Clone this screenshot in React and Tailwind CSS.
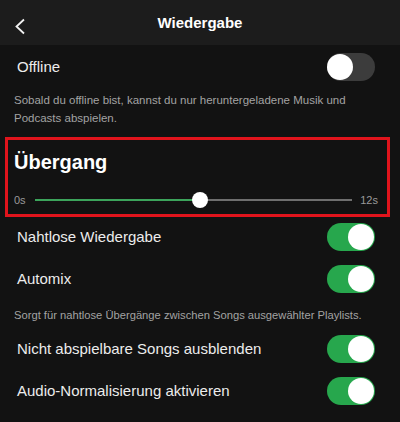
import React, { useState } from "react";

const FONT = { fontFamily: '"Liberation Sans", Arial, sans-serif' };

function Toggle({ on, onClick }) {
  return (
    <button
      onClick={onClick}
      className={`relative w-[48px] h-[28px] rounded-full shrink-0 ${on ? "bg-[#27a74d]" : "bg-[#3c3c3c]"}`}
    >
      <span
        className={`absolute top-[1px] w-[26px] h-[26px] rounded-full bg-white ${on ? "right-[1px]" : "left-0"}`}
      />
    </button>
  );
}

function Row({ label, on, onClick, className = "" }) {
  return (
    <div className={`flex items-center justify-between pl-[17px] pr-[25px] h-[28px] ${className}`}>
      <span className="text-[15px] text-[#ececec]">{label}</span>
      <Toggle on={on} onClick={onClick} />
    </div>
  );
}

export default function App() {
  const [offline, setOffline] = useState(false);
  const [seamless, setSeamless] = useState(true);
  const [automix, setAutomix] = useState(true);
  const [hideUnplayable, setHideUnplayable] = useState(true);
  const [normalize, setNormalize] = useState(true);
  const crossfade = 52; // percent of 12s

  return (
    <div className="w-[400px] h-[422px] bg-[#121212] overflow-hidden" style={FONT}>
      {/* header */}
      <div className="relative h-[45px] bg-[#1c1c1c] flex items-center justify-center">
        <svg className="absolute left-[14px] top-[18px]" width="12" height="17" viewBox="0 0 12 17" fill="none">
          <path d="M10 1.5L2.5 8.5L10 15.5" stroke="#f2f2f2" strokeWidth="1.8" />
        </svg>
        <span className="text-[15px] font-bold text-white pt-[1px]">Wiedergabe</span>
      </div>

      <Row label="Offline" on={offline} onClick={() => setOffline(!offline)} className="mt-[8px]" />
      <p className="mt-[10px] pl-[14px] pr-[40px] text-[11.5px] leading-[18px] text-[#a3a3a3]">
        Sobald du offline bist, kannst du nur heruntergeladene Musik und Podcasts abspielen.
      </p>

      {/* crossfade */}
      <div className="mt-[10px] mx-[5px] w-[385px] border-[3px] border-[#e0141c] pt-[10px] pb-[6px] pl-[6px] pr-[9px]">
        <h2 className="text-[20px] leading-[24px] font-bold text-white">Übergang</h2>
        <div className="mt-[18px] h-[16px] flex items-center">
          <span className="text-[11px] text-[#9a9a9a] w-[21px]">0s</span>
          <div className="relative flex-1 h-[2px] bg-[#6e6e6e]">
            <div className="absolute left-0 top-0 h-full bg-[#3ca45b]" style={{ width: `${crossfade}%` }} />
            <div
              className="absolute top-[-7px] w-[16px] h-[16px] -ml-[8px] rounded-full bg-white"
              style={{ left: `${crossfade}%` }}
            />
          </div>
          <span className="text-[11px] text-[#9a9a9a] pl-[8px]">12s</span>
        </div>
      </div>

      <Row label="Nahtlose Wiedergabe" on={seamless} onClick={() => setSeamless(!seamless)} className="mt-[6px]" />
      <Row label="Automix" on={automix} onClick={() => setAutomix(!automix)} className="mt-[14px]" />
      <p className="mt-[13px] px-[14px] text-[11.2px] leading-[18px] text-[#a3a3a3]">
        Sorgt für nahtlose Übergänge zwischen Songs ausgewählter Playlists.
      </p>
      <Row
        label="Nicht abspielbare Songs ausblenden"
        on={hideUnplayable}
        onClick={() => setHideUnplayable(!hideUnplayable)}
        className="mt-[11px]"
      />
      <Row
        label="Audio-Normalisierung aktivieren"
        on={normalize}
        onClick={() => setNormalize(!normalize)}
        className="mt-[14px]"
      />
    </div>
  );
}
